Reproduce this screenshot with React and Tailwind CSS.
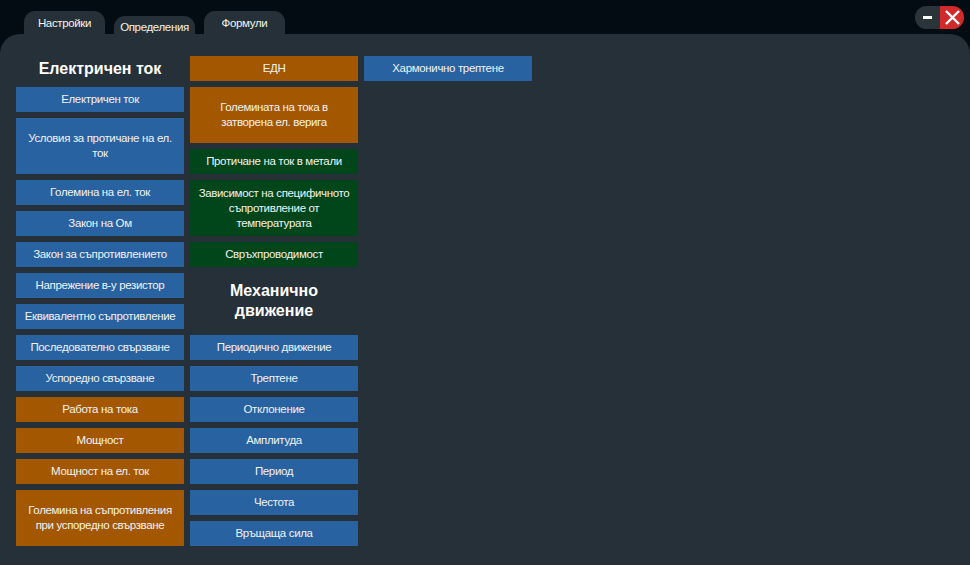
const col1 = [
  { t: 'Електричен ток', c: 'b' },
  { t: 'Условия за протичане на ел. ток', c: 'b', tall: true },
  { t: 'Големина на ел. ток', c: 'b' },
  { t: 'Закон на Ом', c: 'b' },
  { t: 'Закон за съпротивлението', c: 'b' },
  { t: 'Напрежение в-у резистор', c: 'b' },
  { t: 'Еквивалентно съпротивление', c: 'b' },
  { t: 'Последователно свързване', c: 'b' },
  { t: 'Успоредно свързване', c: 'b' },
  { t: 'Работа на тока', c: 'o' },
  { t: 'Мощност', c: 'o' },
  { t: 'Мощност на ел. ток', c: 'o' },
  { t: 'Големина на съпротивления при успоредно свързване', c: 'o', tall: true },
];

const col2a = [
  { t: 'ЕДН', c: 'o' },
  { t: 'Големината на тока в затворена ел. верига', c: 'o', tall: true },
  { t: 'Протичане на ток в метали', c: 'g' },
  { t: 'Зависимост на специфичното съпротивление от температурата', c: 'g', tall: true },
  { t: 'Свръхпроводимост', c: 'g' },
];

const col2b = [
  { t: 'Периодично движение', c: 'b' },
  { t: 'Трептене', c: 'b' },
  { t: 'Отклонение', c: 'b' },
  { t: 'Амплитуда', c: 'b' },
  { t: 'Период', c: 'b' },
  { t: 'Честота', c: 'b' },
  { t: 'Връщаща сила', c: 'b' },
];

const colors = {
  b: 'bg-[#2862a0]',
  o: 'bg-[#a35800]',
  g: 'bg-[#00461a]',
};

const Item = ({ item }) => (
  <div
    className={`${colors[item.c]} ${
      item.tall ? 'h-[56px] px-[6px]' : 'h-[25px] px-1'
    } flex items-center justify-center text-center text-[11.5px] tracking-[-0.35px] leading-[15px] text-[#f2f2f2]`}
  >
    {item.t}
  </div>
);

const Tab = ({ label, low }) => (
  <div
    className={`w-[81px] ${
      low ? 'h-[18px] pt-[3px]' : 'h-[23px] pt-[4px]'
    } bg-[#263038] rounded-t-[11px] flex justify-center text-[11.5px] tracking-[-0.35px] text-[#f4f4ec]`}
  >
    {label}
  </div>
);

export default function App() {
  return (
    <div
      className="w-[970px] h-[565px] bg-[#030b13] flex flex-col relative overflow-hidden"
      style={{ fontFamily: '"Liberation Sans", Arial, sans-serif' }}
    >
      {/* Tabs */}
      <div className="h-[34px] flex items-end pl-[24px] gap-[9px]">
        <Tab label="Настройки" />
        <Tab label="Определения" low />
        <Tab label="Формули" />
      </div>

      {/* Window buttons */}
      <div className="absolute top-[6px] left-[915px] w-[49px] h-[23px] flex rounded-full overflow-hidden">
        <div className="w-[25px] bg-[#2b3439] flex items-center justify-center">
          <div className="w-[9px] h-[3px] bg-white" />
        </div>
        <div className="w-[24px] bg-[#d02a2a] flex items-center justify-center">
          <svg width="17" height="17" viewBox="0 0 17 17">
            <path d="M2 2 L15 15 M15 2 L2 15" stroke="white" strokeWidth="2.4" />
          </svg>
        </div>
      </div>

      {/* Panel */}
      <div className="flex-1 bg-[#263038] rounded-t-[20px] pt-[22px] pl-[16px] flex gap-[6px] items-start">
        <div className="w-[168px] flex flex-col gap-[6px]">
          <div className="h-[25px] flex items-center justify-center text-[16px] font-bold text-white">
            Електричен ток
          </div>
          {col1.map((it) => (
            <Item key={it.t} item={it} />
          ))}
        </div>
        <div className="w-[168px] flex flex-col gap-[6px]">
          {col2a.map((it) => (
            <Item key={it.t} item={it} />
          ))}
          <div className="h-[56px] flex items-center justify-center text-center text-[16px] leading-[20px] font-bold text-white px-6">
            Механично движение
          </div>
          {col2b.map((it) => (
            <Item key={it.t} item={it} />
          ))}
        </div>
        <div className="w-[168px] flex flex-col gap-[6px]">
          <Item item={{ t: 'Хармонично трептене', c: 'b' }} />
        </div>
      </div>
    </div>
  );
}
